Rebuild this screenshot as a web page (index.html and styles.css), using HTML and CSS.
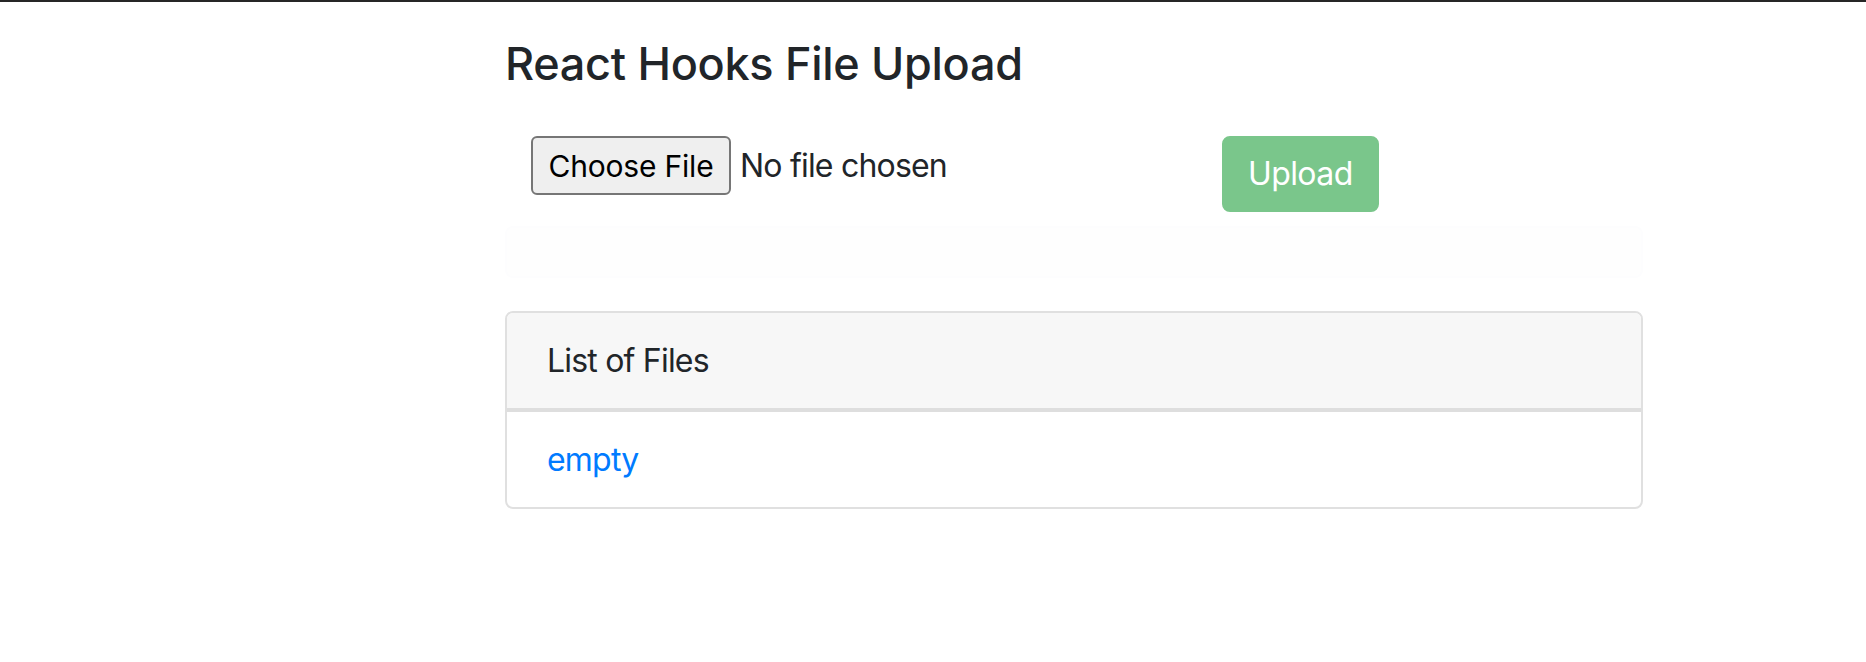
FILE: index.html
```html
<!DOCTYPE html>
<html lang="en">
<head>
<meta charset="utf-8">
<title>React Hooks File Upload</title>
<link rel="stylesheet" href="styles.css">
</head>
<body>
<div class="topbar"></div>
<div class="container">
  <h4 class="title">React Hooks File Upload</h4>
  <div class="upload-row">
    <div class="picker">
      <input type="file" class="file-input">
    </div>
    <button class="btn-upload" disabled>Upload</button>
  </div>
  <div class="alert" role="alert"></div>
  <div class="card">
    <div class="card-header">List of Files</div>
    <ul class="list-group">
      <li class="list-item"><a class="file-link" href="#">empty</a></li>
    </ul>
  </div>
</div>
</body>
</html>
```

FILE: styles.css
```css
html, body {
  margin: 0;
  padding: 0;
  background: #ffffff;
}

body {
  font-family: "Inter", "Liberation Sans", sans-serif;
  font-size: 32px;
  line-height: 48px;
  letter-spacing: -0.8px;
  color: #212529;
}

.topbar {
  height: 2px;
  background: #262626;
}

.container {
  margin-left: 505px;
  width: 1138px;
}

.title {
  margin: 35px 0 0 0;
  font-size: 45px;
  line-height: 54px;
  font-weight: 500;
  letter-spacing: -0.3px;
  color: #212529;
}

.upload-row {
  margin-top: 45px;
  display: grid;
  grid-template-columns: 717px auto;
  align-items: start;
}

.picker {
  padding-left: 26px;
  height: 59px;
}

.file-input {
  font-family: inherit;
  font-size: 32px;
  letter-spacing: -0.8px;
  color: #212529;
  height: 59px;
  width: 600px;
  padding: 0;
  margin: 0;
}

.file-input::file-selector-button {
  font-family: inherit;
  font-size: 30px;
  letter-spacing: -0.2px;
  color: #000000;
  width: 200px;
  height: 59px;
  padding: 0;
  margin: 0 9px 0 0;
  background: #efefef;
  border: 2px solid #767676;
  border-radius: 6px;
}

.btn-upload {
  justify-self: start;
  font-family: inherit;
  font-size: 32px;
  line-height: 48px;
  letter-spacing: -0.6px;
  color: #ffffff;
  background: #7ac68b;
  border: 2px solid #7ac68b;
  border-radius: 8px;
  padding: 12px 24px;
}

.alert {
  margin-top: 14px;
  margin-bottom: 33px;
  height: 48px;
  border: 2px solid #fdfdfe;
  background: #fefefe;
  border-radius: 8px;
}

.card {
  border: 2px solid #e0e0e0;
  border-radius: 8px;
  overflow: hidden;
}

.card-header {
  padding: 24px 40px 23px 40px;
  background: #f7f7f7;
  border-bottom: 2px solid #dedede;
}

.list-group {
  list-style: none;
  margin: 0;
  padding: 0;
}

.list-item {
  padding: 24px 40px 23px 40px;
  border-top: 2px solid #dedede;
}

.file-link {
  color: #007bff;
  text-decoration: none;
}
```
